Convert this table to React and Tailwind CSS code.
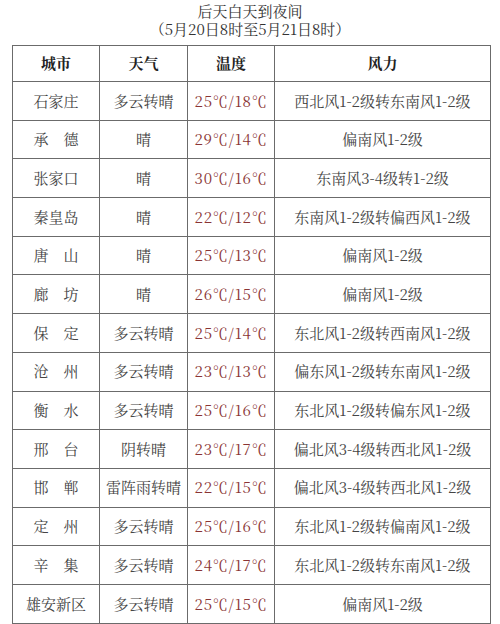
import React from "react";

const rows = [
  ["石家庄", "多云转晴", "25℃/18℃", "西北风1-2级转东南风1-2级"],
  ["承　德", "晴", "29℃/14℃", "偏南风1-2级"],
  ["张家口", "晴", "30℃/16℃", "东南风3-4级转1-2级"],
  ["秦皇岛", "晴", "22℃/12℃", "东南风1-2级转偏西风1-2级"],
  ["唐　山", "晴", "25℃/13℃", "偏南风1-2级"],
  ["廊　坊", "晴", "26℃/15℃", "偏南风1-2级"],
  ["保　定", "多云转晴", "25℃/14℃", "东北风1-2级转西南风1-2级"],
  ["沧　州", "多云转晴", "23℃/13℃", "偏东风1-2级转东南风1-2级"],
  ["衡　水", "多云转晴", "25℃/16℃", "东北风1-2级转偏东风1-2级"],
  ["邢　台", "阴转晴", "23℃/17℃", "偏北风3-4级转西北风1-2级"],
  ["邯　郸", "雷阵雨转晴", "22℃/15℃", "偏北风3-4级转西北风1-2级"],
  ["定　州", "多云转晴", "25℃/16℃", "东北风1-2级转偏南风1-2级"],
  ["辛　集", "多云转晴", "24℃/17℃", "东北风1-2级转东南风1-2级"],
  ["雄安新区", "多云转晴", "25℃/15℃", "偏南风1-2级"],
];

const font = {
  fontFamily:
    '"Noto Serif CJK SC", "Liberation Serif", "Noto Sans CJK SC", serif',
};

export default function App() {
  return (
    <div
      className="w-[500px] h-[624px] bg-white overflow-hidden text-[#444]"
      style={font}
    >
      <div className="pt-[2px] text-center text-[15px] leading-[18px] text-[#333]">
        <div>后天白天到夜间</div>
        <div>（5月20日8时至5月21日8时）</div>
      </div>
      <table className="mt-[7px] ml-[12px] w-[478px] border-collapse table-fixed text-[15px]">
        <colgroup>
          <col className="w-[87px]" />
          <col className="w-[88px]" />
          <col className="w-[87px]" />
          <col className="w-[216px]" />
        </colgroup>
        <thead>
          <tr className="h-[36px]">
            {["城市", "天气", "温度", "风力"].map((h) => (
              <th
                key={h}
                className="border border-[#6b6b6b] font-bold text-[#222] text-center p-0"
              >
                {h}
              </th>
            ))}
          </tr>
        </thead>
        <tbody>
          {rows.map((r) => (
            <tr key={r[0]} className="h-[38.7px]">
              <td className="border border-[#6b6b6b] text-center p-0 whitespace-nowrap">
                {r[0]}
              </td>
              <td className="border border-[#6b6b6b] text-center p-0 whitespace-nowrap">
                {r[1]}
              </td>
              <td className="border border-[#6b6b6b] text-center p-0 whitespace-nowrap text-[#8a3434] tracking-[0.8px]">
                {r[2]}
              </td>
              <td className="border border-[#6b6b6b] text-center p-0 whitespace-nowrap">
                {r[3]}
              </td>
            </tr>
          ))}
        </tbody>
      </table>
    </div>
  );
}
